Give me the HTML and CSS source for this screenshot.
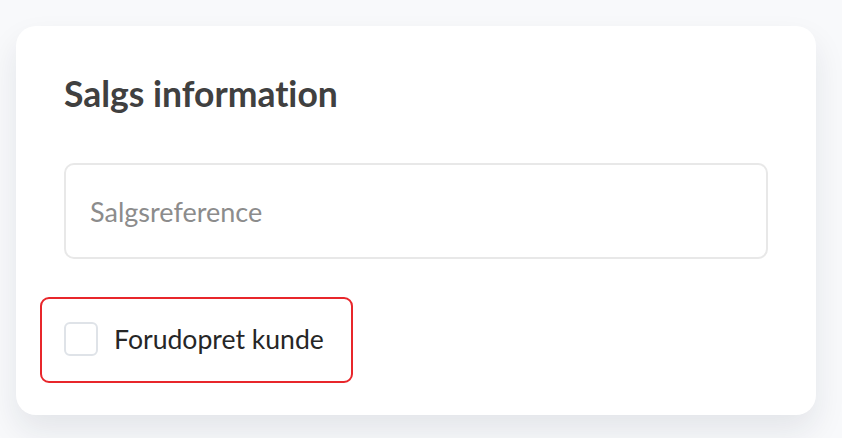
FILE: index.html
```html
<!DOCTYPE html>
<html lang="da">

<head>
    <meta charset="UTF-8">
    <meta name="viewport" content="width=device-width, initial-scale=1.0">
    <title>Salgs information</title>
    <link rel="stylesheet" href="styles.css">
</head>

<body>
    <div class="card">
        <h2 class="card-title">Salgs information</h2>

        <input type="text" class="text-input" placeholder="Salgsreference">

        <label class="check-row">
            <input type="checkbox" class="check-box">
            <span class="check-label">Forudopret kunde</span>
        </label>
    </div>
</body>

</html>
```
FILE: styles.css
```css
body {
    margin: 0;
    padding: 26px 26px 23px 16px;
    background-color: #f8f9fb;
    font-family: Lato, 'Noto Sans', sans-serif;
    font-variant-ligatures: none;
}

.card {
    width: 800px;
    height: 389px;
    box-sizing: border-box;
    background-color: #fff;
    border-radius: 20px;
    padding: 48px 48px 0 48px;
    box-shadow: 0 16px 32px rgba(20, 30, 50, 0.09);
    display: flex;
    flex-direction: column;
    align-items: flex-start;
}

.card-title {
    margin: 0;
    font-size: 35.5px;
    font-weight: 700;
    color: #404040;
    line-height: 40px;
}

.text-input {
    margin-top: 49px;
    width: 704px;
    height: 96px;
    box-sizing: border-box;
    border: 2px solid #e8e8e8;
    border-radius: 10px;
    padding: 0 24px;
    font-family: inherit;
    font-size: 27px;
    color: #333;
    outline: none;
}

.text-input::placeholder {
    color: #8c8c8c;
}

.check-row {
    margin: 38px 0 0 -24px;
    display: flex;
    align-items: center;
    gap: 16px;
    padding: 23px 27px 25px 22px;
    border: 2px solid #e8262b;
    border-radius: 9px;
    cursor: pointer;
}

.check-box {
    appearance: none;
    margin: 0;
    width: 34px;
    height: 34px;
    border: 2px solid #dfe3e8;
    border-radius: 6px;
    background-color: #fff;
}

.check-label {
    font-size: 26.6px;
    color: #262626;
}
```
